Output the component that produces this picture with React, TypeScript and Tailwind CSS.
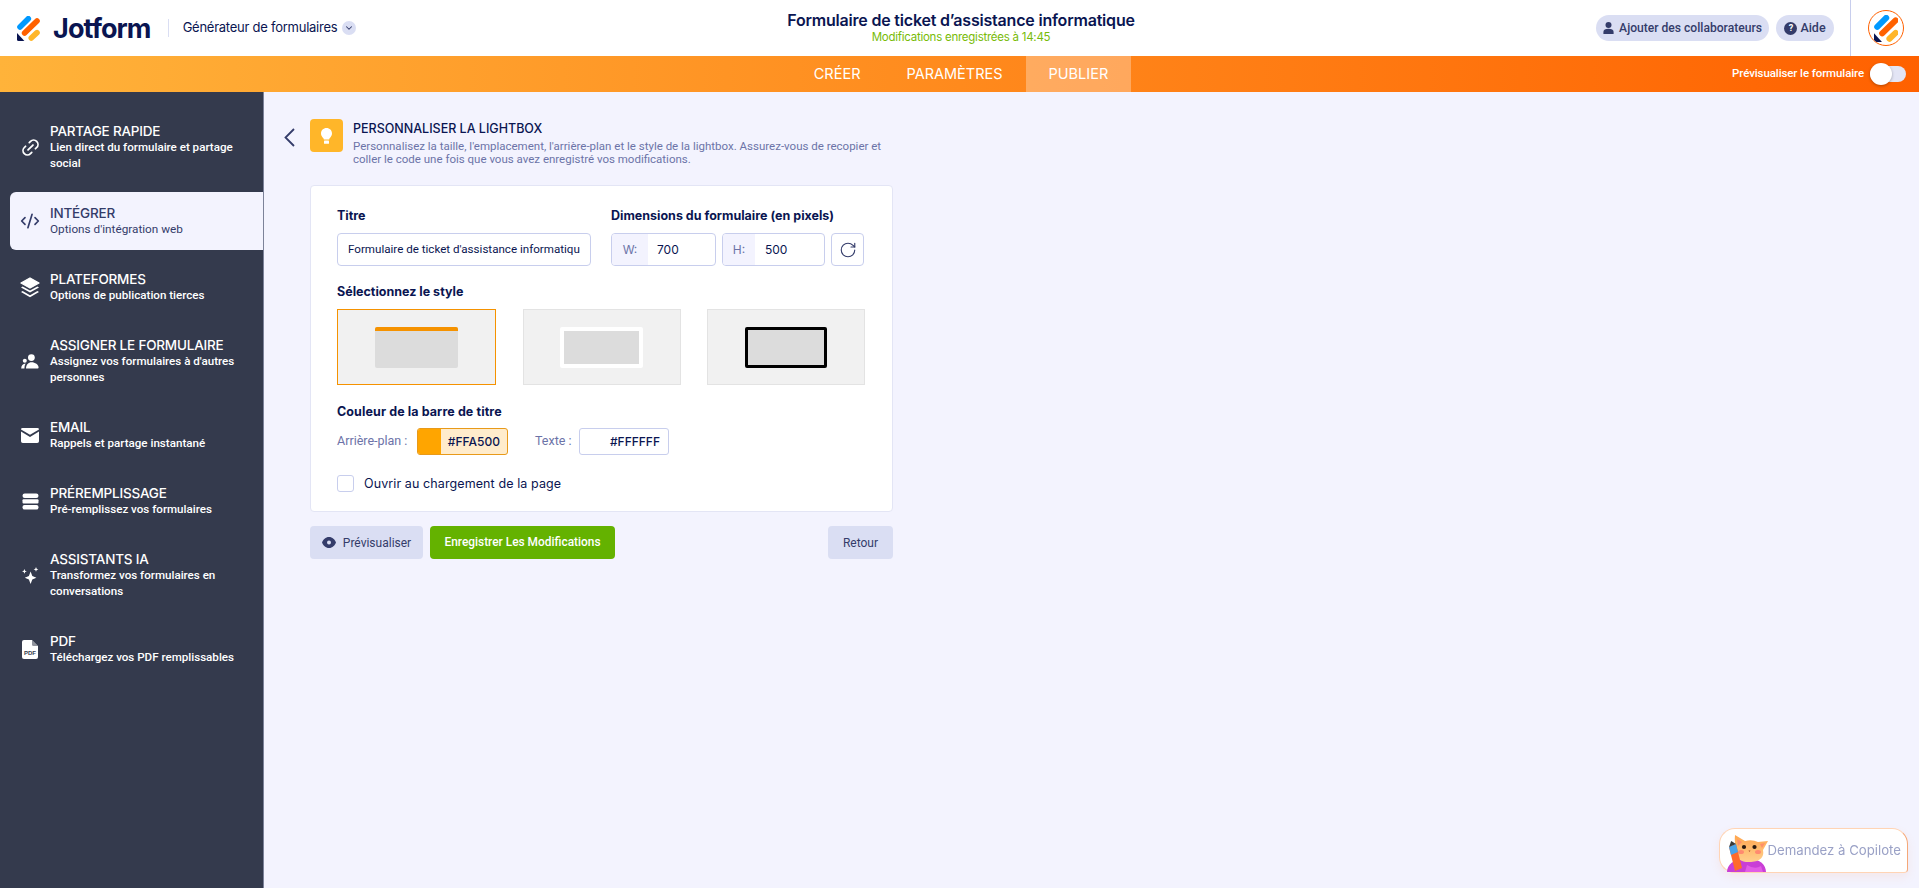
import { ChevronDown, CodeXml, Link2, RotateCw } from "lucide-react"
import type { ReactNode } from "react"

function JotformMark({ size = 25 }: { size?: number }) {
  return (
    <svg width={size * 0.92} height={size} viewBox="0 0 23 25" fill="none">
      <path d="M3 11 L11.3 2.7" stroke="#0099ff" strokeWidth="5.6" strokeLinecap="round" />
      <path d="M7.6 17 L20 5" stroke="#ff6100" strokeWidth="5.6" strokeLinecap="round" />
      <path d="M14.3 22 L20 16.6" stroke="#ffb629" strokeWidth="5.6" strokeLinecap="round" />
      <path d="M0 17 L7.4 25 H1.6 Q0 25 0 23.4 Z" fill="#0a1551" />
    </svg>
  )
}

function LinkIcon() {
  return <Link2 className="h-[21px] w-[21px] -rotate-45 text-white" strokeWidth={2} />
}

function LayersIcon() {
  return (
    <svg width="20" height="21" viewBox="0 0 20 21" fill="white">
      <path d="M10 1 L19 6 L10 11 L1 6 Z" stroke="white" strokeWidth="1.4" strokeLinejoin="round" />
      <path d="M2.6 9.4 L10 13.6 L17.4 9.4 L19 10.5 L10 15.6 L1 10.5 Z" />
      <path d="M2.6 14 L10 18.2 L17.4 14 L19 15.1 L10 20.2 L1 15.1 Z" />
    </svg>
  )
}

function PeopleIcon() {
  return (
    <svg width="18" height="15" viewBox="0 0 18 15" fill="white">
      <circle cx="10.4" cy="3.6" r="3.4" />
      <path d="M5 14.4 C5 10.6 7.4 8.2 10.6 8.2 C14 8.2 17.6 10.6 17.6 13.4 Q17.6 14.4 16.6 14.4 Z" />
      <circle cx="3.8" cy="6.8" r="2" />
      <path d="M0.2 14.4 C0.2 11.6 1.8 9.8 4.6 9.6 C3.8 11 3.4 12.6 3.4 14.4 Z" />
    </svg>
  )
}

function MailIcon() {
  return (
    <svg width="18" height="15" viewBox="0 0 18 15" fill="white">
      <path d="M1.6 0 H16.4 Q18 0 18 1.4 L9 6.8 L0 1.4 Q0 0 1.6 0 Z" />
      <path d="M0 3.6 L9 9 L18 3.6 V13.2 Q18 15 16.2 15 H1.8 Q0 15 0 13.2 Z" />
    </svg>
  )
}

function PrefillIcon() {
  return (
    <svg width="17" height="17" viewBox="0 0 17 17" fill="white">
      <rect x="0.5" y="0.5" width="16" height="4.4" rx="2.2" />
      <rect x="0.5" y="6.2" width="16" height="4.4" rx="1" />
      <rect x="0.5" y="12" width="16" height="4.6" rx="2" />
    </svg>
  )
}

function SparkIcon() {
  return (
    <svg width="17" height="17" viewBox="0 0 17 17" fill="white">
      <path d="M8.6 4.6 L10.3 9 L14.4 10.7 L10.3 12.4 L8.6 17 L6.9 12.4 L2.8 10.7 L6.9 9 Z" />
      <path d="M2.4 2 L3.1 3.8 L4.8 4.4 L3.1 5 L2.4 6.8 L1.7 5 L0 4.4 L1.7 3.8 Z" />
      <path d="M14 0 L14.7 1.8 L16.4 2.4 L14.7 3 L14 4.8 L13.3 3 L11.6 2.4 L13.3 1.8 Z" />
    </svg>
  )
}

function PdfIcon() {
  return (
    <svg width="16" height="19" viewBox="0 0 16 19">
      <path d="M2 0 H10 L16 6 V17 Q16 19 14 19 H2 Q0 19 0 17 V2 Q0 0 2 0 Z" fill="white" />
      <path d="M10 0 V4.5 Q10 6 11.5 6 H16 Z" fill="#343a4d" opacity="0.55" />
      <text x="8" y="14.6" textAnchor="middle" fontSize="6" fontWeight="700" fill="#343a4d" fontFamily="'Liberation Sans', sans-serif">PDF</text>
    </svg>
  )
}

const navItems: { title: string; lines: string; icon: ReactNode; active?: boolean }[] = [
  { title: "PARTAGE RAPIDE", lines: "Lien direct du formulaire et partage social", icon: <LinkIcon /> },
  { title: "INTÉGRER", lines: "Options d'intégration web", icon: <CodeXml className="h-[20px] w-[20px] text-[#343c6a]" strokeWidth={2} />, active: true },
  { title: "PLATEFORMES", lines: "Options de publication tierces", icon: <LayersIcon /> },
  { title: "ASSIGNER LE FORMULAIRE", lines: "Assignez vos formulaires à d'autres personnes", icon: <PeopleIcon /> },
  { title: "EMAIL", lines: "Rappels et partage instantané", icon: <MailIcon /> },
  { title: "PRÉREMPLISSAGE", lines: "Pré-remplissez vos formulaires", icon: <PrefillIcon /> },
  { title: "ASSISTANTS IA", lines: "Transformez vos formulaires en conversations", icon: <SparkIcon /> },
  { title: "PDF", lines: "Téléchargez vos PDF remplissables", icon: <PdfIcon /> },
]

function TopBar() {
  return (
    <header className="grid h-[56px] grid-cols-[1fr_auto_1fr] items-center bg-white">
      <div className="flex items-center pl-[17px]">
        <JotformMark />
        <span className="ml-[13px] text-[27px] font-bold leading-none tracking-[-0.9px] text-[#0a1551]">Jotform</span>
        <div className="ml-[17px] h-[18px] w-px bg-[#dadef3]" />
        <span className="ml-[14px] text-[13px] tracking-[-0.25px] text-[#0a1551]">Générateur de formulaires</span>
        <span className="ml-[5px] flex h-[14px] w-[14px] items-center justify-center rounded-full bg-[#dadef3]">
          <ChevronDown className="h-[10px] w-[10px] text-[#343c6a]" strokeWidth={2.5} />
        </span>
      </div>
      <div className="-mt-[2px] ml-[3px] flex flex-col items-center">
        <span className="text-[16px] font-semibold leading-[19px] tracking-[-0.2px] text-[#0a1551]">Formulaire de ticket d’assistance informatique</span>
        <span className="text-[11.5px] leading-[14px] tracking-[-0.25px] text-[#78bb07]">Modifications enregistrées à 14:45</span>
      </div>
      <div className="flex h-full items-center justify-end">
        <div className="flex h-[26px] w-[173px] items-center justify-center gap-[5px] rounded-full bg-[#dadef3] font-['Roboto',sans-serif] text-[12.1px] font-medium text-[#343c6a]">
          <svg width="11" height="12" viewBox="0 0 11 12" fill="#343c6a">
            <circle cx="5.5" cy="3" r="3" />
            <path d="M0.4 12 V10 C0.4 7.8 2.4 6.8 5.5 6.8 C8.6 6.8 10.6 7.8 10.6 10 V12 Z" />
          </svg>
          Ajouter des collaborateurs
        </div>
        <div className="ml-[7px] flex h-[26px] w-[58px] items-center justify-center gap-[3px] rounded-full bg-[#dadef3] font-['Roboto',sans-serif] text-[12.5px] font-medium text-[#343c6a]">
          <span className="flex h-[13px] w-[13px] items-center justify-center rounded-full bg-[#343c6a] text-[9px] font-bold leading-none text-white">?</span>
          Aide
        </div>
        <div className="ml-[16px] flex h-full w-[69px] items-center justify-start border-l border-[#c8ceed] pl-[17px]">
          <div className="flex h-[36px] w-[36px] items-center justify-center overflow-hidden rounded-full border border-[#ff6100] bg-white">
            <JotformMark size={27} />
          </div>
        </div>
      </div>
    </header>
  )
}

function TabBar() {
  return (
    <nav className="grid h-[36px] grid-cols-[1fr_auto_1fr] items-center bg-[linear-gradient(90deg,#ffb33a,#ff6100)]">
      <div />
      <div className="ml-[3px] flex h-full items-center text-[14.5px] text-white">
        <span className="px-[23px]">CRÉER</span>
        <span className="px-[23px]">PARAMÈTRES</span>
        <span className="flex h-full items-center bg-white/30 px-[23px]">PUBLIER</span>
      </div>
      <div className="flex items-center justify-end pr-[13px]">
        <span className="font-['Roboto',sans-serif] text-[11.5px] font-medium tracking-[-0.1px] text-white">Prévisualiser le formulaire</span>
        <div className="ml-[6px] h-[16px] w-[36px] rounded-full bg-[#e3e5f5]">
          <div className="-mt-[3px] h-[22px] w-[22px] rounded-full bg-white shadow-[0_1px_3px_rgba(0,0,0,0.3)]" />
        </div>
      </div>
    </nav>
  )
}

function Sidebar() {
  return (
    <aside className="flex h-[796px] w-[264px] shrink-0 flex-col gap-[8px] border-r border-[#7c8299] bg-[#343a4d] pl-[10px] pt-[18px]">
      {navItems.map((item) => (
        <div
          key={item.title}
          className={`flex items-center rounded-l-[6px] py-[13px] ${item.active ? "bg-[#f3f3fe] text-[#343c6a]" : "text-white"}`}
        >
          <div className="flex w-[40px] shrink-0 items-center justify-center">{item.icon}</div>
          <div className="w-[195px]">
            <div className="text-[13.5px] font-medium leading-[16px] tracking-[-0.2px]">{item.title}</div>
            <div className={`font-['Roboto',sans-serif] leading-[16px] ${item.active ? "text-[11.75px]" : "text-[11.6px] font-medium"}`}>{item.lines}</div>
          </div>
        </div>
      ))}
    </aside>
  )
}

function StyleBox({ selected, children }: { selected?: boolean; children: ReactNode }) {
  return (
    <div className={`flex h-[76px] items-center justify-center border bg-[#f1f1f1] ${selected ? "w-[159px] border-[#f59200]" : "w-[158px] border-[#e3e3e3]"}`}>
      {children}
    </div>
  )
}

function LightboxCard() {
  return (
    <section className="h-[327px] w-[583px] rounded-[4px] border border-[#e3e5f5] bg-white pl-[26px] pr-[26px] pt-[21px]">
      <div className="flex">
        <div className="w-[274px]">
          <div className="text-[12.5px] font-bold leading-[18px] text-[#0a1551]">Titre</div>
          <div className="mt-[8px] flex h-[33px] w-[254px] items-center overflow-hidden whitespace-nowrap rounded-[4px] border border-[#c8ceed] pl-[10px] pr-[10px] font-['Roboto',sans-serif] text-[11.6px] text-[#0a1551]">
            <span className="overflow-hidden">Formulaire de ticket d'assistance informatique</span>
          </div>
        </div>
        <div>
          <div className="text-[12.5px] font-bold leading-[18px] text-[#0a1551]">Dimensions du formulaire (en pixels)</div>
          <div className="mt-[8px] flex gap-[6px]">
            <div className="flex h-[33px] w-[105px] items-center overflow-hidden rounded-[4px] border border-[#c8ceed] text-[12px] text-[#0a1551]">
              <span className="flex h-full w-[36px] items-center justify-center bg-[#f3f3fe] text-[#6c73a8]">W:</span>
              <span className="pl-[9px]">700</span>
            </div>
            <div className="flex h-[33px] w-[103px] items-center overflow-hidden rounded-[4px] border border-[#c8ceed] text-[12px] text-[#0a1551]">
              <span className="flex h-full w-[32px] items-center justify-center bg-[#f3f3fe] text-[#6c73a8]">H:</span>
              <span className="pl-[10px]">500</span>
            </div>
            <div className="flex h-[33px] w-[33px] items-center justify-center rounded-[4px] border border-[#c8ceed]">
              <RotateCw className="h-[18px] w-[18px] text-[#343c6a]" strokeWidth={1.5} />
            </div>
          </div>
        </div>
      </div>

      <div className="mt-[17px] text-[12.5px] font-bold leading-[18px] text-[#0a1551]">Sélectionnez le style</div>
      <div className="mt-[8px] flex w-[528px] justify-between">
        <StyleBox selected>
          <div className="h-[41px] w-[83px] overflow-hidden rounded-[2px] bg-[#dcdcdc]">
            <div className="h-[4px] bg-[#f59200]" />
          </div>
        </StyleBox>
        <StyleBox>
          <div className="h-[41px] w-[83px] rounded-[2px] border-[4px] border-white bg-[#dcdcdc]" />
        </StyleBox>
        <StyleBox>
          <div className="h-[41px] w-[82px] rounded-[2px] border-[3px] border-black bg-[#dcdcdc]" />
        </StyleBox>
      </div>

      <div className="mt-[18px] text-[12.5px] font-bold leading-[18px] tracking-[0.1px] text-[#0a1551]">Couleur de la barre de titre</div>
      <div className="mt-[7px] flex h-[27px] items-center text-[12px]">
        <span className="w-[80px] font-['Roboto',sans-serif] text-[12.5px] text-[#6c73a8]">Arrière-plan :</span>
        <div className="flex h-full w-[91px] overflow-hidden rounded-[3px] border border-[#e89a1a] bg-[#ffeccc]">
          <div className="w-[23px] bg-[#ffa500]" />
          <span className="flex flex-1 items-center justify-end pr-[7px] font-medium text-[#0a1551]">#FFA500</span>
        </div>
        <span className="ml-[27px] w-[44px] font-['Roboto',sans-serif] text-[12.5px] text-[#6c73a8]">Texte :</span>
        <div className="flex h-full w-[90px] items-center justify-end rounded-[3px] border border-[#c8ceed] pr-[8px] font-medium text-[#0a1551]">#FFFFFF</div>
      </div>

      <div className="mt-[20px] flex items-center">
        <div className="h-[17px] w-[17px] rounded-[3px] border border-[#c8ceed]" />
        <span className="ml-[10px] text-[12.5px] leading-[17px] tracking-[0.1px] text-[#0a1551]">Ouvrir au chargement de la page</span>
      </div>
    </section>
  )
}

function CopiloteButton() {
  return (
    <div className="fixed bottom-[15px] right-[11px] flex h-[45px] w-[189px] items-center justify-end rounded-[16px] rounded-br-[4px] border border-[#ffd4b5] border-r-[#f5a878] bg-white pr-[6px] shadow-[0_4px_10px_rgba(255,150,90,0.12)]">
      <svg className="absolute bottom-0 left-[7px]" width="41" height="38" viewBox="0 0 41 38">
        <defs>
          <linearGradient id="catFur" x1="0" y1="0" x2="0" y2="1">
            <stop offset="0" stopColor="#ffa54d" />
            <stop offset="1" stopColor="#ffd08e" />
          </linearGradient>
        </defs>
        <path d="M0 38 C0 30 8 24 20 25 C32 24 39 30 39 38 Z" fill="#c93fd6" />
        <path d="M8 1 L18 7 Q25 5 31 8 L41 7 L36 16 Q38 27 24 28 Q10 29 10 19 Q7 9 8 1 Z" fill="url(#catFur)" />
        <path d="M10 5 L15 8 L11 12 Z" fill="#ff8f6a" />
        <path d="M38 9 L33 10 L35 14 Z" fill="#ff8f6a" />
        <circle cx="17" cy="13" r="2.1" fill="#2a1a10" />
        <circle cx="27.5" cy="13" r="2.1" fill="#2a1a10" />
        <ellipse cx="14" cy="18" rx="3" ry="2" fill="#ff8a70" />
        <ellipse cx="31" cy="18" rx="3" ry="2" fill="#ff8a70" />
        <path d="M21.5 16.5 L23.5 16.5 L22.5 18 Z" fill="#a5502e" />
        <path d="M2 13 L9 10 L15 34 L8 37 Z" fill="#ff6a2a" />
        <path d="M2 13 L9 10 L11 18 L4 21 Z" fill="#4aa3e8" />
        <path d="M2 13 L4.2 7 L9 10 Z" fill="#3a3a3a" />
        <path d="M20 31 Q28 36 34 32 L36 38 H18 Z" fill="#e25ce6" />
      </svg>
      <span className="text-[13.2px] text-[#9aa1c6]">Demandez à Copilote</span>
    </div>
  )
}

export default function App() {
  return (
    <div className="h-[888px] overflow-hidden bg-[#f3f3fe] font-['Inter','Liberation_Sans',sans-serif]">
      <TopBar />
      <TabBar />
      <div className="flex">
        <Sidebar />
        <main className="pl-[20px] pt-[27px]">
          <div className="flex">
            <div className="w-[26px] pt-[9px]">
              <svg width="11" height="19" viewBox="0 0 11 19" fill="none">
                <path d="M10 1 L1.5 9.5 L10 18" stroke="#343c6a" strokeWidth="1.8" />
              </svg>
            </div>
            <div className="flex">
              <div className="flex h-[33px] w-[33px] items-center justify-center rounded-[4px] bg-[#ffb629]">
                <svg width="11" height="16" viewBox="0 0 11 16" fill="white">
                  <path d="M5.5 0 C8.6 0 11 2.4 11 5.4 C11 7.4 9.8 8.8 8.8 10 C8.4 10.5 8.2 11 8.2 11.4 H2.8 C2.8 11 2.6 10.5 2.2 10 C1.2 8.8 0 7.4 0 5.4 C0 2.4 2.4 0 5.5 0 Z" />
                  <rect x="3" y="12.6" width="5" height="3.2" rx="0.6" />
                </svg>
              </div>
              <div className="ml-[10px] w-[540px] pt-[1px]">
                <div className="text-[12.5px] font-medium leading-[18px] text-[#0a1551]">PERSONNALISER LA LIGHTBOX</div>
                <p className="mt-[2px] w-[532px] font-['Roboto',sans-serif] text-[11.5px] leading-[13px] text-[#6c73a8]">
                  Personnalisez la taille, l'emplacement, l'arrière-plan et le style de la lightbox. Assurez-vous de recopier et coller le code une fois que vous avez enregistré vos modifications.
                </p>
              </div>
            </div>
          </div>
          <div className="ml-[26px] mt-[19px]">
            <LightboxCard />
            <div className="mt-[14px] flex w-[583px] items-center font-['Roboto',sans-serif] text-[12px]">
              <button className="flex h-[33px] w-[113px] items-center justify-center gap-[7px] rounded-[4px] bg-[#dadef3] text-[#343c6a]">
                <svg width="14" height="11" viewBox="0 0 14 11">
                  <path d="M7 0 C10.4 0 13 2.6 14 5.5 C13 8.4 10.4 11 7 11 C3.6 11 1 8.4 0 5.5 C1 2.6 3.6 0 7 0 Z" fill="#343c6a" />
                  <circle cx="7" cy="5.5" r="2" fill="#dadef3" />
                </svg>
                Prévisualiser
              </button>
              <button className="ml-[7px] h-[33px] w-[185px] rounded-[4px] bg-[#64b200] text-[11.9px] font-medium text-white">Enregistrer Les Modifications</button>
              <button className="ml-auto h-[33px] w-[65px] rounded-[4px] bg-[#dadef3] text-[#343c6a]">Retour</button>
            </div>
          </div>
        </main>
      </div>
      <CopiloteButton />
    </div>
  )
}
